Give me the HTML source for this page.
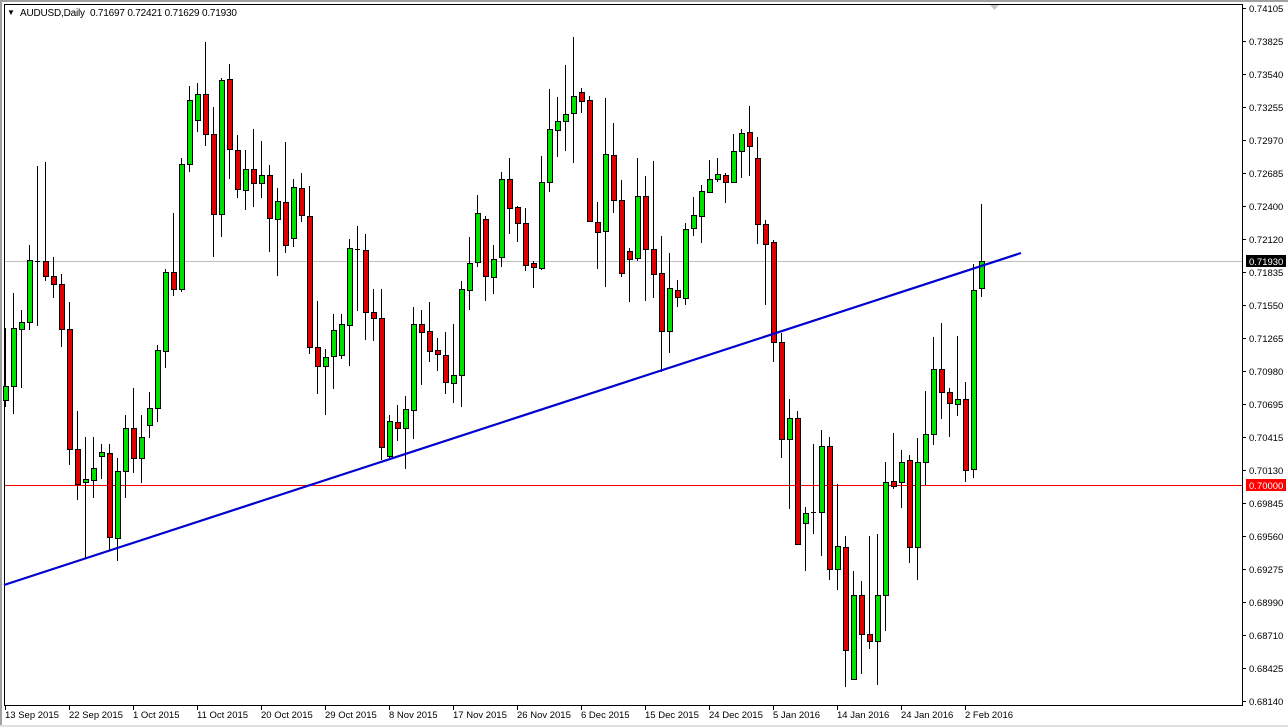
<!DOCTYPE html>
<html><head><meta charset="utf-8"><style>
html,body{margin:0;padding:0;background:#fff;width:1288px;height:727px;overflow:hidden}
svg{display:block}
text{font-family:"Liberation Sans",sans-serif;font-size:10px;fill:#000}
</style></head><body>
<svg id="s" width="1288" height="727" xmlns="http://www.w3.org/2000/svg">
<rect x="0" y="0" width="1288" height="727" fill="#fff"/>
<rect x="0" y="0" width="1288" height="2" fill="#a0a0a0"/>
<rect x="0" y="0" width="2" height="727" fill="#a0a0a0"/>
<rect x="0" y="725" width="1288" height="2" fill="#e0e0e0"/>
<rect x="4.5" y="4.5" width="1238" height="701" fill="none" stroke="#000" stroke-width="1"/>
<rect x="5" y="261" width="1237" height="1" fill="#c0c0c0"/>
<rect x="5" y="485" width="1237" height="1" fill="#ff0000"/>
<g id="c"></g>
<line x1="4" y1="585" x2="1021" y2="253" stroke="#0000d0" stroke-width="2.2"/>
<path d="M990 5 L999 5 L994.5 10 Z" fill="#c8c8c8"/>
<text x="7" y="15" style="font-size:8px">▼</text>
<text x="20" y="16" style="letter-spacing:-0.2px">AUDUSD,Daily&#160; 0.71697 0.72421 0.71629 0.71930</text>
<g id="ax"></g>
</svg>
<script>
var A=[
[2.85,30,0,[
['g',1015,1055,850,1075],['g',850,1015,750,1095],['g',833,851,798,1020],['g',655,833,613,855],['d',657,657,388,845],['r',657,700,376,715],['r',702,725,648,763],['r',725,853,695,903],['r',853,1193,775,1240],['r',1193,1293,1087,1340],['g',1281,1289,1160,1505],['g',1248,1282,1160,1335],['g',1204,1215,1180,1280],['r',1205,1445,1180,1485],['g',1258,1447,1220,1512],['g',1133,1258,1098,1335],['r',1133,1220,1020,1262],['g',1160,1220,1098,1292],['g',1078,1125,1032,1162],['g',912,1078,898,1117],['g',690,915,680,962],['r',690,737,522,757],['g',382,737,365,748],['g',200,382,160,405],['g',183,257,150,292],['r',183,297,35,330],['r',295,525,220,648],['g',143,525,138,590],['r',141,340,98,425],['r',343,452,300,478],['g',395,455,343,512],['r',397,437,283,505]]],
[2.85,30,32,[
['g',413,435,315,478],['r',413,535,385,632],['g',488,538,450,700],['r',490,612,318,635],['g',448,592,425,618],['r',450,528,408,548],['r',530,903,445,923],['r',903,957,773,1037],['g',933,957,908,1097],['g',855,930,808,1022],['g',838,925,808,937],['g',622,840,597,957],['d',624,624,560,800],['r',628,805,582,883],['r',805,822,738,887],['r',822,1188,738,1225],['g',1113,1215,1098,1225],['r',1117,1133,1070,1172],['g',1080,1135,1043,1250],['g',838,1082,790,1167],['r',838,860,798,1013],['r',857,915,775,947],['r',912,922,878,973],['r',925,1002,860,1037],['g',982,1005,838,1062],['g',738,982,715,1075],['g',665,742,590,797],['g',522,662,470,675],['r',540,702,530,773],['g',652,705,613,753]]],
[3,30,62,[
['g',448,682,425,712],['r',448,535,383,613],['r',532,580,528,635],['r',580,705,535,723],['r',700,712,693,775],['g',457,715,378,720],['g',298,457,178,485],['g',273,300,200,380],['g',253,273,105,362],['g',198,250,22,398],['r',187,213,175,248],['r',210,572,198,577],['r',575,607,515,718],['g',373,603,203,770],['r',375,510,280,548],['r',510,730,450,740],['r',663,688,655,815],['g',498,685,383,692],['r',498,658,437,812],['r',658,733,393,803],['r',730,903,618,1025],['g',775,903,668,968],['r',780,802,750,830],['g',598,805,578,825],['g',555,595,500,618],['g',483,558,465,640],['g',448,485,390,485],['g',433,448,383,457],['r',435,457,430,520],['g',363,457,312,458]]],
[2.57,90,92,[
['g',110,157,100,225],['r',108,143,40,222],['r',175,345,122,397],['r',345,395,335,553],['r',390,647,385,700],['r',648,898,625,945],['g',843,898,795,1078],['r',842,1168,825,1168],['g',1087,1112,1072,1237],['d',1085,1090,910,1140],['g',915,1085,875,1197],['r',915,1230,892,1260],['g',1172,1230,1013,1285],['r',1175,1440,1145,1535],['g',1298,1513,1235,1513],['r',1298,1397,1262,1500],['r',1397,1417,1145,1437],['g',1298,1417,1140,1530],['g',1008,1298,955,1390],['r',1005,1018,882,1025],['g',955,1008,925,1075],['r',952,1175,937,1215],['g',955,1175,895,1260],['g',883,957,773,1015],['g',717,885,635,912],['r',717,775,598,845],['r',775,805,765,893],['g',793,808,632,837],['r',793,977,750,1008],['g',513,975,448,998],['g',440,510,293,532]]]
];
var h='';
A.forEach(function(seg){var s=seg[0],o=seg[1],st=seg[2];seg[3].forEach(function(c,k){
var i=st+k,x=5+8*i,bt=Math.round(c[1]/s+o),bb=Math.round(c[2]/s+o),wt=Math.round(c[3]/s+o),wb=Math.round(c[4]/s+o);
h+='<line x1="'+(x+0.5)+'" y1="'+wt+'" x2="'+(x+0.5)+'" y2="'+wb+'" stroke="#000" stroke-width="1"/>';
if(c[0]=='d'||bb-bt<1){h+='<line x1="'+(x-2)+'" y1="'+(bt+0.5)+'" x2="'+(x+3)+'" y2="'+(bt+0.5)+'" stroke="#000" stroke-width="1"/>';}
else{h+='<rect x="'+(x-1.5)+'" y="'+(bt+0.5)+'" width="5" height="'+(bb-bt)+'" fill="'+(c[0]=='g'?'#00e000':'#e00000')+'" stroke="#000" stroke-width="1"/>';}
});});
document.getElementById('c').innerHTML=h;
var P=['0.74105','0.73825','0.73540','0.73255','0.72970','0.72685','0.72400','0.72120','0.71835','0.71550','0.71265','0.70980','0.70695','0.70415','0.70130','0.69845','0.69560','0.69275','0.68990','0.68710','0.68425','0.68140'];
var g='';
P.forEach(function(p,i){var y=8+33*i;g+='<line x1="1242" y1="'+(y+0.5)+'" x2="1246" y2="'+(y+0.5)+'" stroke="#000"/><text x="1249" y="'+(y+4)+'" style="font-size:9.5px">'+p+'</text>';});
g+='<rect x="1246" y="255" width="40" height="12" fill="#000"/><text x="1249" y="265" style="fill:#fff;font-size:9.5px">0.71930</text>';
g+='<rect x="1246" y="479" width="40" height="12" fill="#ff0000"/><text x="1249" y="489" style="fill:#fff;font-size:9.5px">0.70000</text>';
var D=['13 Sep 2015','22 Sep 2015','1 Oct 2015','11 Oct 2015','20 Oct 2015','29 Oct 2015','8 Nov 2015','17 Nov 2015','26 Nov 2015','6 Dec 2015','15 Dec 2015','24 Dec 2015','5 Jan 2016','14 Jan 2016','24 Jan 2016','2 Feb 2016'];
D.forEach(function(d,i){var x=5+64*i;g+='<line x1="'+(x+0.5)+'" y1="705" x2="'+(x+0.5)+'" y2="710" stroke="#000"/><text x="'+(x)+'" y="718" style="font-size:9.5px">'+d+'</text>';});
document.getElementById('ax').innerHTML=g;
</script>
</body></html>
